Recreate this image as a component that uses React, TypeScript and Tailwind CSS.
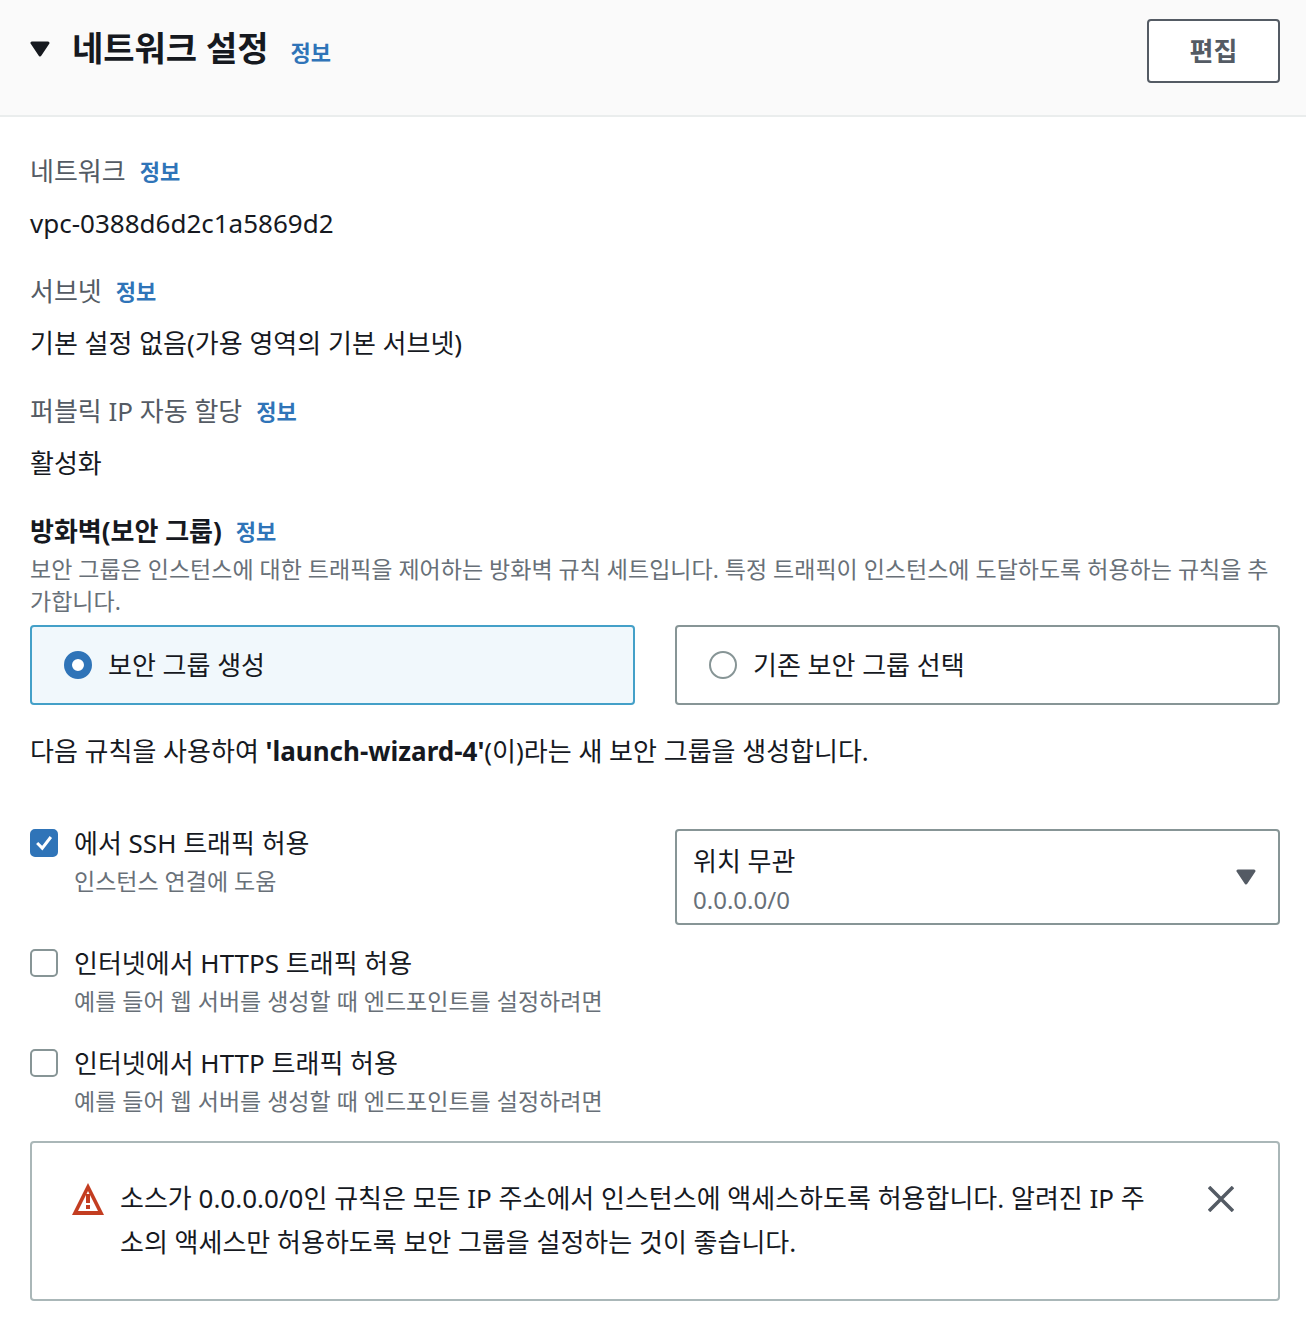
const font = "font-['Noto_Sans','Noto_Sans_CJK_KR',sans-serif]";

function Info({ className = '' }: { className?: string }) {
  return <span className={`text-[22px] leading-[28px] font-bold text-[#2f74b8] ${className}`}>정보</span>;
}

function Caret({ color, className = '' }: { color: string; className?: string }) {
  return (
    <svg viewBox="0 0 20 16" className={`h-[16px] w-[20px] shrink-0 ${className}`}>
      <path d="M2 2h16L10 14z" fill={color} stroke={color} strokeWidth="3" strokeLinejoin="round" />
    </svg>
  );
}

function Field({ label, value }: { label: string; value: string }) {
  return (
    <div className="mb-[40px]">
      <div className="flex h-[28px] items-center gap-[14px] text-[26px] text-[#545b64]">
        <span>{label}</span>
        <Info />
      </div>
      <div className="mt-[24px] h-[28px] text-[26px] leading-[28px] text-[#16191f]">{value}</div>
    </div>
  );
}

function CheckRow({ checked, title, hint }: { checked?: boolean; title: string; hint: string }) {
  return (
    <div className="flex gap-[16px]">
      <div
        className={`flex h-[28px] w-[28px] shrink-0 items-center justify-center rounded-[5px] border-2 ${
          checked ? 'border-[#2f74b8] bg-[#2f74b8]' : 'border-[#879596] bg-white'
        }`}
      >
        {checked && (
          <svg viewBox="0 0 28 28" className="h-[26px] w-[26px]" fill="none">
            <path d="M6 14l6 6L22 7" stroke="white" strokeWidth="3.5" />
          </svg>
        )}
      </div>
      <div className="-mt-[2px]">
        <div className="text-[26px] leading-[32px] text-[#16191f]">{title}</div>
        <div className="mt-[8px] text-[23px] leading-[28px] text-[#687078]">{hint}</div>
      </div>
    </div>
  );
}

export default function App() {
  return (
    <div className={`min-h-[1324px] bg-white ${font}`}>
      <header className="flex h-[117px] items-start justify-between border-b-2 border-[#eaeded] bg-[#fafafa] pl-[30px] pr-[26px] pt-[19px]">
        <div className="flex h-[58px] items-center">
          <Caret color="#16191f" className="mr-[22px] mt-[2px]" />
          <span className="text-[34px] font-bold leading-[40px] text-[#16191f]">네트워크 설정</span>
          <Info className="ml-[22px] mt-[8px]" />
        </div>
        <button className="flex h-[64px] w-[133px] items-center justify-center rounded-[4px] border-2 border-[#545b64] bg-white text-[26px] font-bold text-[#545b64]">
          편집
        </button>
      </header>

      <main className="pl-[30px] pr-[26px] pt-[40px]">
        <Field label="네트워크" value="vpc-0388d6d2c1a5869d2" />
        <Field label="서브넷" value="기본 설정 없음(가용 영역의 기본 서브넷)" />
        <Field label="퍼블릭 IP 자동 할당" value="활성화" />

        <div className="flex h-[28px] items-center gap-[14px] text-[26px] font-bold text-[#16191f]">
          <span>방화벽(보안 그룹)</span>
          <Info />
        </div>
        <p className="mt-[8px] text-[23px] leading-[32px] text-[#687078]">
          보안 그룹은 인스턴스에 대한 트래픽을 제어하는 방화벽 규칙 세트입니다. 특정 트래픽이 인스턴스에 도달하도록 허용하는 규칙을 추가합니다.
        </p>

        <div className="mt-[8px] grid grid-cols-2 gap-[40px]">
          <div className="flex h-[80px] items-center gap-[16px] rounded-[4px] border-2 border-[#44a0c8] bg-[#f1f8fc] px-[32px]">
            <span className="h-[28px] w-[28px] rounded-full border-[8px] border-[#2f74b8] bg-white" />
            <span className="text-[26px] text-[#16191f]">보안 그룹 생성</span>
          </div>
          <div className="flex h-[80px] items-center gap-[16px] rounded-[4px] border-2 border-[#879596] px-[32px]">
            <span className="h-[28px] w-[28px] rounded-full border-2 border-[#879596] bg-white" />
            <span className="text-[26px] text-[#16191f]">기존 보안 그룹 선택</span>
          </div>
        </div>

        <p className="mt-[30px] text-[26px] leading-[32px] text-[#16191f]">
          다음 규칙을 사용하여 <b>'launch-wizard-4'</b>(이)라는 새 보안 그룹을 생성합니다.
        </p>

        <div className="mt-[62px] grid grid-cols-2 gap-[40px]">
          <CheckRow checked title="에서 SSH 트래픽 허용" hint="인스턴스 연결에 도움" />
          <div className="h-[96px] rounded-[4px] border-2 border-[#879596] pl-[16px] pr-[22px] pt-[14px]">
            <div className="flex items-center justify-between">
              <div>
                <div className="text-[26px] leading-[32px] text-[#16191f]">위치 무관</div>
                <div className="mt-[9px] text-[24px] leading-[28px] text-[#687078]">0.0.0.0/0</div>
              </div>
              <Caret color="#545b64" className="mb-[6px]" />
            </div>
          </div>
        </div>

        <div className="mt-[24px] flex flex-col gap-[34px]">
          <CheckRow title="인터넷에서 HTTPS 트래픽 허용" hint="예를 들어 웹 서버를 생성할 때 엔드포인트를 설정하려면" />
          <CheckRow title="인터넷에서 HTTP 트래픽 허용" hint="예를 들어 웹 서버를 생성할 때 엔드포인트를 설정하려면" />
        </div>

        <div className="mt-[26px] flex h-[160px] rounded-[4px] border-2 border-[#aab7b8] pl-[40px] pr-[44px] pt-[33px]">
          <svg viewBox="0 0 32 32" className="mt-[7px] h-[32px] w-[32px] shrink-0">
            <path
              fillRule="evenodd"
              d="M16 0l16 32H0zM16 8L6 28h20z"
              fill="#c33d21"
            />
            <path d="M14 11h4v9h-4zM14 22h4v4h-4z" fill="#c33d21" />
          </svg>
          <p className="ml-[16px] flex-1 text-[26px] leading-[44px] text-[#16191f]">
            소스가 0.0.0.0/0인 규칙은 모든 IP 주소에서 인스턴스에 액세스하도록 허용합니다. 알려진 IP 주소의 액세스만 허용하도록 보안 그룹을 설정하는 것이 좋습니다.
          </p>
          <svg viewBox="0 0 26 26" className="ml-[60px] mt-[10px] h-[26px] w-[26px] shrink-0" fill="none">
            <path d="M1 1l24 24M25 1L1 25" stroke="#545b64" strokeWidth="3.5" />
          </svg>
        </div>
      </main>
    </div>
  );
}
